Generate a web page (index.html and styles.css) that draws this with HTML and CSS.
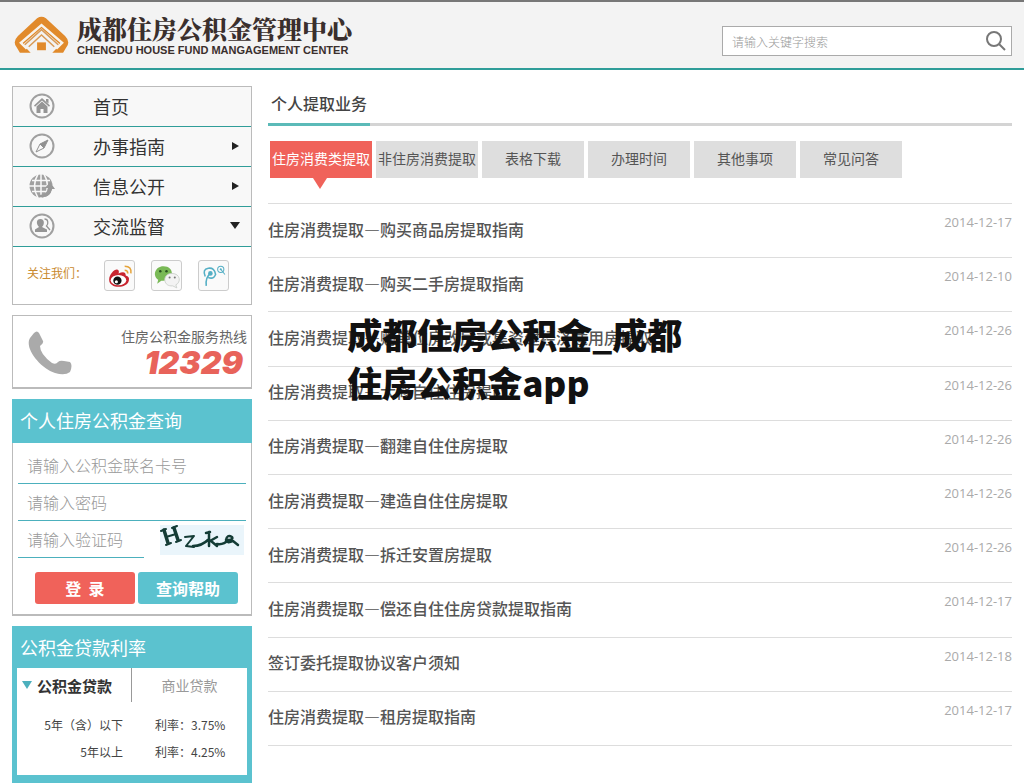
FILE: index.html
```html
<!DOCTYPE html>
<html lang="zh-CN">
<head>
<meta charset="utf-8">
<meta name="viewport" content="width=device-width, initial-scale=1">
<title>成都住房公积金管理中心</title>
<link rel="stylesheet" href="styles.css">
</head>
<body>
<header class="header">
  <a class="brand" href="#">
    <svg class="brand-mark" viewBox="0 0 56 38" aria-hidden="true">
      <path fill="#e18a2b" d="M23.500 2Q28-1 32.500 2L52 20Q58 26 53 32L50 37H39L44 32L46 28L28 12L10 28L12 32L17 37H6L3 32Q-2 26 4 20Z"/>
      <path fill="none" stroke="#f8f3ec" stroke-width="2.500" d="M13 33L7 27L28 9L49 27L43 33"/>
      <path fill="none" stroke="#d99a55" stroke-width="1.500" d="M11 29L28 13.500L45 29M15 31L28 19L41 31"/>
      <path fill="#e18a2b" d="M23.500 26.500h9v8h-9z"/>
    </svg>
    <span class="brand-text">
      <span class="brand-cn">成都住房公积金管理中心</span>
      <span class="brand-en">CHENGDU HOUSE FUND MANGAGEMENT CENTER</span>
    </span>
  </a>
  <form class="search">
    <input class="search-input" type="text" aria-label="搜索" placeholder="请输入关键字搜索">
    <button class="search-button" type="button" aria-label="搜索">
      <svg width="22" height="22" viewBox="0 0 22 22" fill="none" stroke="#777" stroke-width="2"><circle cx="9" cy="9" r="7"/><path d="M14 14l6 6"/></svg>
    </button>
  </form>
</header>

<div class="layout">
  <aside class="sidebar">
    <section class="box">
      <nav class="menu">
        <a class="menu-item" href="#">
          <svg class="menu-icon" viewBox="0 0 26 26"><circle cx="13" cy="13" r="11.500" fill="none" stroke="#a0a0a0" stroke-width="2"/><path fill="#959595" d="M13 5l8 7.500-1 1.200-7-6.200-7 6.200-1-1.200zM17 6h2.500v4.500l-2.500-2zM7.500 13.500l5.500-5 5.500 5V20h-4v-4h-3v4h-4z"/></svg>
          <span>首页</span>
        </a>
        <a class="menu-item" href="#">
          <svg class="menu-icon" viewBox="0 0 26 26"><circle cx="13" cy="13" r="11.500" fill="none" stroke="#a0a0a0" stroke-width="2"/><path fill="#909090" d="M19 7l-4 8-4-4z"/><path fill="none" stroke="#909090" stroke-linejoin="round" d="M19 7l-4 8-8 4 4-8zM11 11l4 4"/></svg>
          <span>办事指南</span><i class="arrow"></i>
        </a>
        <a class="menu-item" href="#">
          <svg class="menu-icon" viewBox="0 0 26 26"><circle cx="12" cy="13" r="11.500" fill="#a0a0a0"/><path fill="none" stroke="#f8f8f8" stroke-width="1.500" d="M12 1v24M0 13h24M3 7.500h18M3 18.500h18M9 1Q2 13 9 25M15 1Q22 13 15 25"/><path fill="#999" d="M10 22Q18 22 19 15h-3l5-6 5 7h-3Q21 26 10 24z"/></svg>
          <span>信息公开</span><i class="arrow"></i>
        </a>
        <a class="menu-item" href="#">
          <svg class="menu-icon" viewBox="0 0 26 26"><circle cx="13" cy="13" r="11.500" fill="none" stroke="#a0a0a0" stroke-width="2"/><path fill="#959595" d="M11.500 6c4.500 0 4 6 1.500 8l5 2.500V19H6v-2.500L10 14C7 11 7 6 11.500 6z"/><path fill="none" stroke="#959595" stroke-width="1.300" d="M15.500 6c4 0 4 5 2 7l3.500 4"/></svg>
          <span>交流监督</span><i class="arrow arrow-down"></i>
        </a>
      </nav>
      <div class="follow">
        <span class="follow-label">关注我们：</span>
        <a class="social" href="#" aria-label="微博">
          <svg viewBox="0 0 28 28"><path fill="#c8242f" d="M4 18C4 12 11 6 13 9Q14 11 13 12Q20 9 20 14Q24 15 23 19C21 27 4 27 4 18z"/><ellipse cx="13" cy="18.500" rx="7.500" ry="5" fill="#fff"/><circle cx="12" cy="19" r="4" fill="#111"/><circle cx="11" cy="20" r="1.500" fill="#fff"/><path fill="none" stroke="#e6a43a" stroke-width="1.500" d="M19 5q7 0 6 7M19 9q3 0 3 3"/></svg>
        </a>
        <a class="social" href="#" aria-label="微信">
          <svg viewBox="0 0 28 28"><path fill="#79b956" d="M11 5c11 0 11 14 0 14l-2 0-4 3 1-4C0 14 3 5 11 5z"/><circle cx="8" cy="10" r="1.200" fill="#295421"/><circle cx="14" cy="10" r="1.200" fill="#295421"/><path fill="#f3f3f3" stroke="#c9cdc9" stroke-width=".8" d="M19 12c9 0 9 9 4 11l1 3-4-2c-10 1-10-12-1-12z"/><circle cx="17" cy="16" r="1" fill="#777"/><circle cx="22" cy="16" r="1" fill="#777"/></svg>
        </a>
        <a class="social" href="#" aria-label="腾讯微博">
          <svg viewBox="0 0 28 28" fill="none" stroke="#54afc5" stroke-width="1.500"><path d="M6 15Q3 8 9 7T16 13Q14 18 9 16M11 12Q6 16 7 24"/><circle cx="11" cy="12" r="1.500" fill="#54afc5"/><circle cx="21" cy="8" r="3" stroke-width="1"/><circle cx="21" cy="8" r="1" fill="#54afc5" stroke="none"/><path stroke-width="1" d="M21 8l4 5"/></svg>
        </a>
      </div>
    </section>

    <section class="box hotline">
      <svg class="phone" viewBox="0 0 44 46" aria-hidden="true"><path fill="#aaa" d="M6 2Q9-1 11 2L15 10Q16 12 12 15Q12 23 24 32Q28 34 30 31Q32 29 36 30L42 31Q45 34 42 41Q37 45 27 42C12 37-4 17 2 7z"/></svg>
      <div class="hotline-text"><span>住房公积金服务热线</span><strong>12329</strong></div>
    </section>

    <section class="box query">
      <h2 class="panel-title">个人住房公积金查询</h2>
      <form class="query-form">
        <input class="field" type="text" aria-label="公积金联名卡号" placeholder="请输入公积金联名卡号">
        <input class="field" type="password" aria-label="密码" placeholder="请输入密码">
        <div class="captcha-row">
          <input class="field" type="text" aria-label="验证码" placeholder="请输入验证码">
          <svg class="captcha" viewBox="0 0 84 30" role="img" aria-label="验证码图片"><path fill="#eaf5fb" d="M0 0h84v30H0z"/><g fill="none" stroke="#143c36" stroke-linecap="round" stroke-linejoin="round"><path stroke-width="3.500" d="M4 5l4 13M14 3l4 12"/><path stroke-width="2" d="M1 6l5-2M12 3l5-2M6 20l5-2M16 17l5-2M6 12l10-3M25 12l9-1-8 10 8 1"/><path stroke-width="2.500" d="M33 21Q42 21 49 14M49 7L49 21M46 8l4-1M50 16l7-4M51 16l6 5M57 19Q64 20 68 15"/><path stroke-width="2.500" d="M66 15Q74 15 72 12Q67 9 66 15Q67 19 73 16L78 20"/></g></svg>
        </div>
        <div class="actions">
          <button class="button button-red" type="button">登&nbsp; 录</button>
          <button class="button" type="button">查询帮助</button>
        </div>
      </form>
    </section>

    <section class="rates">
      <h2 class="panel-title">公积金贷款利率</h2>
      <div class="rates-body">
        <div class="rate-tabs">
          <button class="rate-tab rate-tab-active" type="button"><i class="marker"></i>公积金贷款</button>
          <button class="rate-tab" type="button">商业贷款</button>
        </div>
        <table class="rate-table">
          <tr><th scope="row">5年（含）以下</th><td>利率：3.75%</td></tr>
          <tr><th scope="row">5年以上</th><td>利率：4.25%</td></tr>
        </table>
      </div>
    </section>
  </aside>

  <main class="content">
    <div class="heading"><h1 class="heading-text">个人提取业务</h1></div>
    <div class="tabs">
      <button class="tab tab-active" type="button">住房消费类提取</button>
      <button class="tab" type="button">非住房消费提取</button>
      <button class="tab" type="button">表格下载</button>
      <button class="tab" type="button">办理时间</button>
      <button class="tab" type="button">其他事项</button>
      <button class="tab" type="button">常见问答</button>
    </div>
    <ul class="list">
      <li class="row"><a href="#">住房消费提取—购买商品房提取指南</a><time>2014-12-17</time></li>
      <li class="row"><a href="#">住房消费提取—购买二手房提取指南</a><time>2014-12-10</time></li>
      <li class="row"><a href="#">住房消费提取—购单位房改房或集资建经济适用房提取</a><time>2014-12-26</time></li>
      <li class="row"><a href="#">住房消费提取—大修自住住房提取</a><time>2014-12-26</time></li>
      <li class="row"><a href="#">住房消费提取—翻建自住住房提取</a><time>2014-12-26</time></li>
      <li class="row"><a href="#">住房消费提取—建造自住住房提取</a><time>2014-12-26</time></li>
      <li class="row"><a href="#">住房消费提取—拆迁安置房提取</a><time>2014-12-26</time></li>
      <li class="row"><a href="#">住房消费提取—偿还自住住房贷款提取指南</a><time>2014-12-17</time></li>
      <li class="row"><a href="#">签订委托提取协议客户须知</a><time>2014-12-18</time></li>
      <li class="row"><a href="#">住房消费提取—租房提取指南</a><time>2014-12-17</time></li>
    </ul>
  </main>
</div>
<div class="caption">成都住房公积金_成都住房公积金app</div>
</body>
</html>
```

FILE: styles.css
```css
* { box-sizing: border-box; }
body {
  margin: 0;
  position: relative;
  background: #fff;
  color: #555;
  font-family: "Noto Sans CJK SC", sans-serif;
  font-size: 16px;
}
a { color: inherit; text-decoration: none; }
button, input { font-family: inherit; border: 0; margin: 0; padding: 0; }
h1, h2, ul { margin: 0; padding: 0; font-weight: 400; }

.header {
  display: flex;
  justify-content: space-between;
  align-items: center;
  height: 70px;
  padding: 0 12px 0 14px;
  background: #f3f3f3;
  border-top: 2px solid #777;
  border-bottom: 2px solid #2f9d99;
}
.brand { display: flex; align-items: center; gap: 8px; color: #3a2f2d; }
.brand-mark { width: 55px; height: 38px; }
.brand-text { display: flex; flex-direction: column; }
.brand-cn { font-family: "Noto Serif CJK SC", "Noto Sans CJK SC", serif; font-weight: 900; font-size: 25px; line-height: 29px; }
.brand-en { font: bold 11px/14px "Liberation Sans", sans-serif; }
.search { display: flex; align-items: center; width: 290px; height: 30px; margin-top: 12px; background: #fff; border: 1px solid #aaa; }
.search-input { flex: 1; min-width: 0; padding-left: 9px; font-size: 12px; background: none; }
.search-button { display: flex; padding-right: 4px; background: none; }
::placeholder { color: #999; opacity: 1; font-weight: 300; }

.layout { display: flex; gap: 16px; padding: 16px 12px 0; }
.sidebar { flex: 0 0 240px; display: flex; flex-direction: column; gap: 10px; }
.box { border: 1px solid #bbb; }
.menu-item {
  display: grid;
  grid-template-columns: 64px 1fr 12px;
  align-items: center;
  height: 40px;
  padding: 0 9px 2px 16px;
  background: #f8f8f8;
  border-bottom: 1px solid #2f9d99;
  color: #333;
  font-size: 18px;
}
.menu-icon { width: 26px; height: 26px; }
.arrow { border: solid transparent; border-width: 4px 0 4px 7px; border-left-color: #222; justify-self: start; margin-left: 2px; }
.arrow-down { border-width: 7px 5px 0; border-top-color: #222; border-left-color: transparent; margin-left: 0; }
.follow { display: flex; align-items: center; gap: 16px; height: 57px; padding-left: 14px; }
.follow-label { width: 61px; margin-bottom: 6px; font-size: 12px; white-space: nowrap; color: #c98a2e; }
.social { width: 31px; height: 31px; border: 1px solid #ccc; border-radius: 3px; background: #fafafa; }
.social svg { display: block; }

.hotline { display: flex; justify-content: space-between; height: 74px; padding: 9px 4px 0 15px; border-bottom-width: 2px; }
.phone { width: 44px; height: 46px; margin-top: 6px; }
.hotline-text { display: flex; flex-direction: column; align-items: flex-end; font-size: 14px; line-height: 22px; color: #666; }
.hotline-text strong { padding-right: 4px; font: italic 900 32px/32px Inter, sans-serif; color: #e8635a; }

.panel-title { height: 44px; padding-left: 8px; background: #5bc2cf; color: #fff; font-size: 18px; line-height: 42px; font-weight: 400; }
.query { border-bottom-width: 2px; border-top: 0; }
.query .panel-title { margin: 0 -1px; }
.query-form { padding: 4px 5px 10px; }
.field { display: block; width: 100%; height: 37px; padding-left: 9px; background: none; border-bottom: 1px solid #4cb0bd; border-radius: 0; font-size: 16px; }
.captcha-row { display: flex; align-items: center; justify-content: space-between; padding-right: 2px; }
.captcha-row .field { width: 126px; }
.captcha { width: 84px; height: 30px; }
.actions { display: flex; justify-content: center; gap: 3px; margin-top: 14px; padding-left: 9px; }
.button { width: 100px; height: 32px; border-radius: 3px; background: #5bc2cf; color: #fff; font-size: 16px; font-weight: 700; }
.button-red { background: #f0625a; }

.rates { padding: 0 5px 8px; background: #5bc2cf; }
.rates .panel-title { margin: 0 -5px; height: 42px; }
.rates-body { height: 107px; background: #fff; }
.rate-tabs { display: flex; height: 34px; }
.rate-tab { flex: 1; background: none; color: #999; font-size: 14px; }
.rate-tab-active { flex: 0 0 50%; display: flex; align-items: center; gap: 5px; padding-left: 5px; border-right: 1px solid #999; color: #333; font-size: 15px; font-weight: 700; }
.marker { border: solid transparent; border-width: 8px 5px 0; border-top-color: #4cb0bd; }
.rate-table { width: 100%; margin-top: 9px; border-collapse: collapse; font-size: 12px; line-height: 27px; color: #444; }
.rate-table th { width: 106px; padding: 0; text-align: right; font-weight: 400; }
.rate-table td { padding: 0 0 0 32px; }

.content { flex: 1; min-width: 0; }
.heading { border-bottom: 3px solid #d4d4d4; }
.heading-text { width: 102px; margin-bottom: -3px; padding: 0 0 2px 3px; border-bottom: 3px solid #5bbab8; color: #444; font-size: 16px; font-weight: 500; line-height: 35px; white-space: nowrap; }
.tabs { display: flex; gap: 4px; padding: 15px 0 0 2px; }
.tab { position: relative; width: 102px; height: 37px; padding-bottom: 3px; background: #dedede; color: #555; font-size: 14px; white-space: nowrap; }
.tab-active { background: #f0625a; color: #fff; }
.tab-active::after { content: ""; position: absolute; top: 100%; left: 43px; border: solid transparent; border-width: 11px 7px 0; border-top-color: #f0625a; }
.list { display: grid; grid-auto-rows: 1fr; min-height: 543px; margin-top: 25px; list-style: none; border-top: 1px solid #ddd; }
.row { display: flex; justify-content: space-between; align-items: center; border-bottom: 1px solid #ddd; font-weight: 500; }
.row a { padding-bottom: 4px; }
.row time { align-self: flex-start; padding-top: 8px; color: #aaa; font: 13px/20px "Open Sans", sans-serif; }

.caption {
  position: absolute;
  top: 310px;
  left: 34%;
  width: 340px;
  margin-left: -1px;
  color: #111;
  font-size: 35px;
  font-weight: 900;
  line-height: 48px;
  word-break: break-all;
}
```
